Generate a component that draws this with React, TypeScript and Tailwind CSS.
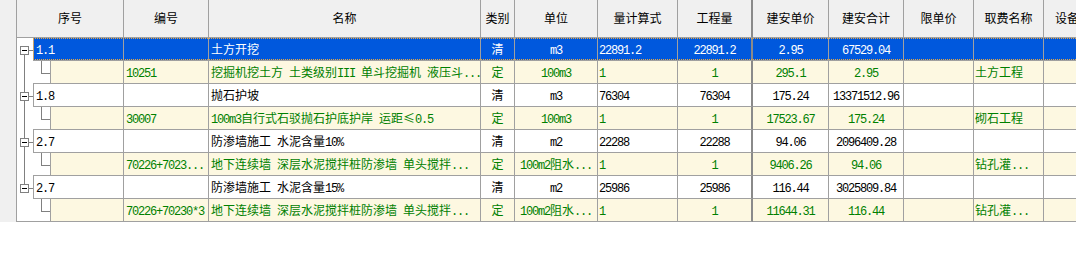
import React from 'react';

type RowData = {
  type: 'parent' | 'child';
  sel?: boolean;
  prev?: boolean;
  next?: boolean;
  trunk?: boolean;
  last?: boolean;
  no?: string;
  code: string;
  name: string;
  cat: string;
  unit: string;
  expr: string;
  qty: string;
  price: string;
  total: string;
  lim: string;
  fee: string;
  equip: string;
};

const rows: RowData[] = [
  { type: 'parent', sel: true, prev: false, next: true, no: '1.1', code: '', name: '土方开挖', cat: '清', unit: 'm3', expr: '22891.2', qty: '22891.2', price: '2.95', total: '67529.04', lim: '', fee: '', equip: '' },
  { type: 'child', trunk: true, code: '10251', name: '挖掘机挖土方 土类级别III 单斗挖掘机 液压斗...', cat: '定', unit: '100m3', expr: '1', qty: '1', price: '295.1', total: '2.95', lim: '', fee: '土方工程', equip: '' },
  { type: 'parent', prev: true, next: true, no: '1.8', code: '', name: '抛石护坡', cat: '清', unit: 'm3', expr: '76304', qty: '76304', price: '175.24', total: '13371512.96', lim: '', fee: '', equip: '' },
  { type: 'child', trunk: true, code: '30007', name: '100m3自行式石驳抛石护底护岸 运距≤0.5', cat: '定', unit: '100m3', expr: '1', qty: '1', price: '17523.67', total: '175.24', lim: '', fee: '砌石工程', equip: '' },
  { type: 'parent', prev: true, next: true, no: '2.7', code: '', name: '防渗墙施工 水泥含量10%', cat: '清', unit: 'm2', expr: '22288', qty: '22288', price: '94.06', total: '2096409.28', lim: '', fee: '', equip: '' },
  { type: 'child', trunk: true, code: '70226+7023...', name: '地下连续墙 深层水泥搅拌桩防渗墙 单头搅拌...', cat: '定', unit: '100m2阻水...', expr: '1', qty: '1', price: '9406.26', total: '94.06', lim: '', fee: '钻孔灌...', equip: '' },
  { type: 'parent', prev: true, next: false, no: '2.7', code: '', name: '防渗墙施工 水泥含量15%', cat: '清', unit: 'm2', expr: '25986', qty: '25986', price: '116.44', total: '3025809.84', lim: '', fee: '', equip: '' },
  { type: 'child', trunk: false, last: true, code: '70226+70230*3', name: '地下连续墙 深层水泥搅拌桩防渗墙 单头搅拌...', cat: '定', unit: '100m2阻水...', expr: '1', qty: '1', price: '11644.31', total: '116.44', lim: '', fee: '钻孔灌...', equip: '' },
];

type ColKey = 'code' | 'name' | 'cat' | 'unit' | 'expr' | 'qty' | 'price' | 'total' | 'lim' | 'fee' | 'equip';

const cols: { key: ColKey; title: string; w: string; cls: string; head: string }[] = [
  { key: 'code', title: '编号', w: 'w-[85px]', cls: 'pl-[2px]', head: 'text-center' },
  { key: 'name', title: '名称', w: 'w-[272px]', cls: 'pl-[2px]', head: 'text-center' },
  { key: 'cat', title: '类别', w: 'w-[34px]', cls: 'text-center', head: 'text-center' },
  { key: 'unit', title: '单位', w: 'w-[83px]', cls: 'text-center', head: 'text-center' },
  { key: 'expr', title: '量计算式', w: 'w-[80px]', cls: 'pl-[1px]', head: 'text-center' },
  { key: 'qty', title: '工程量', w: 'w-[75px] border-r-2 border-r-[#8a8a8a]', cls: 'text-center', head: 'text-center' },
  { key: 'price', title: '建安单价', w: 'w-[76px]', cls: 'text-center', head: 'text-center' },
  { key: 'total', title: '建安合计', w: 'w-[75px]', cls: 'text-center', head: 'text-center' },
  { key: 'lim', title: '限单价', w: 'w-[70px]', cls: 'text-center', head: 'text-center' },
  { key: 'fee', title: '取费名称', w: 'w-[70px]', cls: 'pl-[1px]', head: 'text-center' },
  { key: 'equip', title: '设备', w: 'w-[80px]', cls: 'pl-[2px]', head: 'pl-[11px]' },
];

// ASCII runs drawn in a mono face squeezed to 6px per char, like the old bitmap font
function Txt({ s }: { s: string }) {
  const parts = s.match(/[\x00-\x7f]+|[^\x00-\x7f]+/g) || [];
  return (
    <>
      {parts.map((p, i) =>
        /^[\x00-\x7f]/.test(p) ? (
          <span key={i} className="font-['Liberation_Mono'] tracking-[-1.2px] whitespace-pre">
            {p}
          </span>
        ) : (
          <span key={i}>{p}</span>
        )
      )}
    </>
  );
}

function Tree({ r }: { r: RowData }) {
  const line = '#808080';
  if (r.type === 'parent') {
    return (
      <div className="w-[16px] shrink-0 bg-white">
        <svg width="16" height="23" shapeRendering="crispEdges">
          {r.prev && <line x1="7.5" y1="0" x2="7.5" y2="8" stroke={line} />}
          {r.next && <line x1="7.5" y1="17" x2="7.5" y2="23" stroke={line} />}
          <rect x="3.5" y="8.5" width="8" height="8" fill="#fff" stroke={line} />
          <line x1="5" y1="12.5" x2="10" y2="12.5" stroke="#000" />
          <line x1="12" y1="12.5" x2="16" y2="12.5" stroke={line} />
        </svg>
      </div>
    );
  }
  return (
    <div className="w-[33px] shrink-0 bg-white">
      <svg width="33" height="23" shapeRendering="crispEdges">
        {r.trunk && <line x1="7.5" y1="0" x2="7.5" y2="23" stroke={line} />}
        <line x1="24.5" y1="0" x2="24.5" y2="12" stroke={line} />
        <line x1="24" y1="12.5" x2="33" y2="12.5" stroke={line} />
        {!r.last && <line x1="16" y1="22.5" x2="33" y2="22.5" stroke="#a0a0a0" />}
        {r.last && <line x1="0" y1="22.5" x2="33" y2="22.5" stroke="#a0a0a0" />}
      </svg>
    </div>
  );
}

function Row({ r }: { r: RowData }) {
  const child = r.type === 'child';
  const tone = r.sel
    ? 'bg-[#0058dd] text-white'
    : child
    ? 'bg-[#fdf8e1] text-[#008000]'
    : 'bg-white text-black';
  const cell = 'shrink-0 h-full border-r border-b border-[#a0a0a0] overflow-hidden whitespace-nowrap leading-[22px]';
  return (
    <div className="flex h-[23px]">
      <div className="w-[17px] shrink-0 bg-[#f0f0f0] border-r border-[#a0a0a0]" />
      <Tree r={r} />
      <div className={`relative flex ${tone}`}>
        <div className={`${cell} border-l pl-[2px] ${child ? 'w-[74px]' : 'w-[91px]'}`}>
          <Txt s={r.no || ''} />
        </div>
        {cols.map((c) => (
          <div key={c.key} className={`${cell} ${c.w} ${c.cls}`}>
            <Txt s={r[c.key]} />
          </div>
        ))}
        {r.sel && (
          <div className="absolute left-0 top-0 right-0 h-[22px] border border-dotted border-[#e9a640] pointer-events-none" />
        )}
      </div>
    </div>
  );
}

export default function App() {
  return (
    <div className="w-[1076px] h-[269px] overflow-hidden bg-white text-[12px] font-['Noto_Sans_CJK_SC',sans-serif]">
      {/* 表头 */}
      <div className="flex h-[38px] bg-[#f0f0f0] text-black">
        <div className="w-[17px] shrink-0 border-r border-[#a0a0a0]" />
        <div className="w-[107px] shrink-0 border-r border-b border-[#a0a0a0] text-center leading-[36px]">序号</div>
        {cols.map((c) => (
          <div
            key={c.key}
            className={`shrink-0 border-r border-b border-[#a0a0a0] whitespace-nowrap overflow-hidden leading-[36px] ${c.w} ${c.head}`}
          >
            {c.title}
          </div>
        ))}
      </div>
      {rows.map((r, i) => (
        <Row key={i} r={r} />
      ))}
    </div>
  );
}
